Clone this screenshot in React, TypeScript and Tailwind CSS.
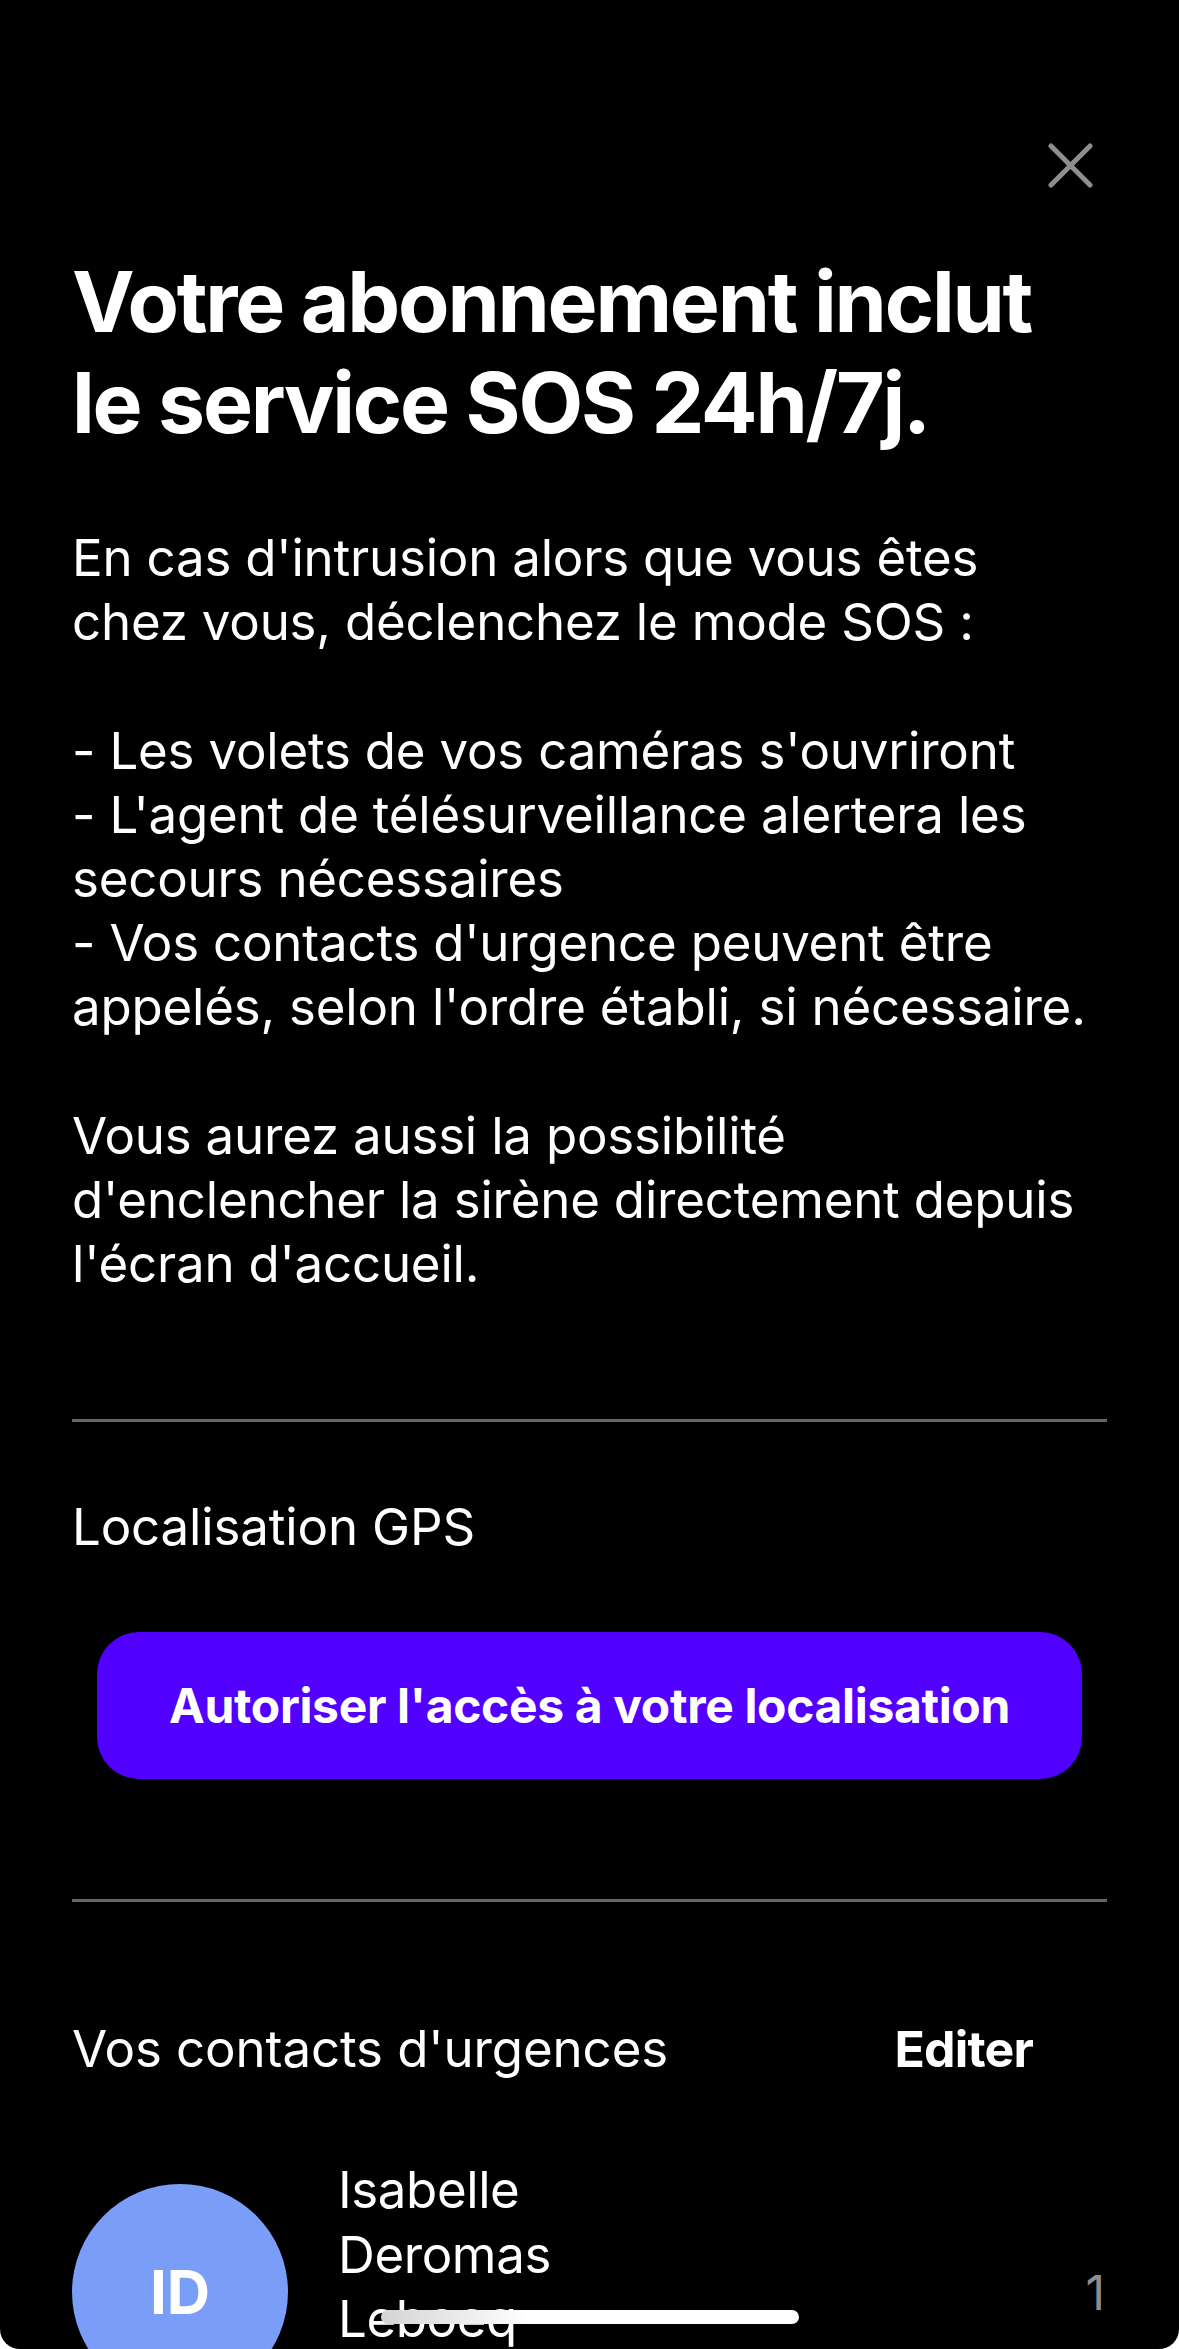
import React from 'react';

function CloseIcon() {
  return (
    <svg width="45" height="45" viewBox="0 0 45 45" fill="none">
      <path d="M3 3L42 42M42 3L3 42" stroke="#8e8e8e" strokeWidth="5" strokeLinecap="round" />
    </svg>
  );
}

const bodyLines = [
  "En cas d'intrusion alors que vous êtes",
  'chez vous, déclenchez le mode SOS :',
  '',
  "- Les volets de vos caméras s'ouvriront",
  "- L'agent de télésurveillance alertera les",
  'secours nécessaires',
  "- Vos contacts d'urgence peuvent être",
  "appelés, selon l'ordre établi, si nécessaire.",
  '',
  'Vous aurez aussi la possibilité',
  "d'enclencher la sirène directement depuis",
  "l'écran d'accueil.",
];

export default function App() {
  return (
    <div className="w-[1179px] h-[2349px] bg-white overflow-hidden font-['Inter',sans-serif]">
      <div className="relative h-full bg-black rounded-b-[20px] overflow-hidden text-white">
        {/* close */}
        <div className="flex justify-end pt-[143px] pr-[86px]">
          <CloseIcon />
        </div>

        <div className="px-[72px]">
          <h1 className="mt-[63px] text-[84px] leading-[101px] font-bold tracking-[-2.2px]">
            Votre abonnement inclut
            <br />
            le service SOS 24h/7j.
          </h1>

          <div className="mt-[73px] text-[51px] leading-[64.2px] tracking-[-0.2px]">
            {bodyLines.map((line, i) => (
              <div key={i} className="h-[64.2px] whitespace-nowrap">
                {line}
              </div>
            ))}
          </div>

          <div className="mt-[123px] h-[3px] bg-[#666666]" />

          {/* GPS */}
          <p className="mt-[73px] text-[51px] leading-[64px] tracking-[-0.15px]">Localisation GPS</p>
          <button className="mt-[73px] mx-[25px] w-[985px] h-[147px] rounded-[42px] bg-[#5200ff] flex items-center justify-center text-[48px] font-bold tracking-[-0.35px]">
            Autoriser l'accès à votre localisation
          </button>

          <div className="mt-[120px] h-[3px] bg-[#666666]" />

          {/* contacts */}
          <div className="mt-[115px] flex items-center justify-between text-[51px] leading-[64px] tracking-[-0.1px]">
            <span>Vos contacts d'urgences</span>
            <span className="mr-[74px] font-bold text-[50px] tracking-[-0.8px]">Editer</span>
          </div>

          <div className="mt-[77px] flex items-start">
            <div className="mt-[26px] w-[216px] h-[216px] shrink-0 rounded-full bg-[#7a9df7] flex items-center justify-center text-[60px] font-bold">
              ID
            </div>
            <div className="ml-[50px] w-[300px] text-[51px] leading-[64.5px] tracking-[-0.4px]">
              Isabelle Deromas Leboeq
            </div>
            <div className="ml-auto mr-[2px] mt-[103px] text-[48px] leading-[64px] text-[#8e8e8e]">1</div>
          </div>
        </div>

        {/* home indicator */}
        <div className="absolute left-[381px] bottom-[25px] w-[418px] h-[14px] rounded-full bg-linear-to-r from-[#d4d4d4] via-white via-[35%] to-white" />
      </div>
    </div>
  );
}
